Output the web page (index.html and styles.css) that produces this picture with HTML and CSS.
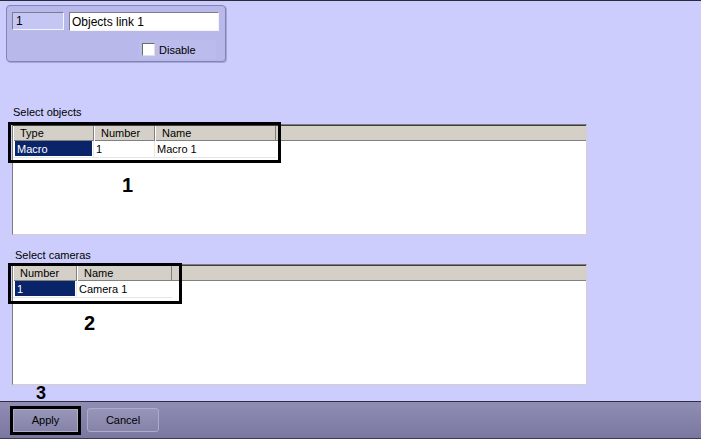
FILE: index.html
```html
<!DOCTYPE html>
<html lang="en">
  <head>
    <meta charset="UTF-8" />
    <title>Objects link</title>
    <link rel="stylesheet" href="styles.css">
  </head>
  <body>
    <div class="props">
      <div class="props-row">
        <input class="field field-id" type="text" value="1" readonly />
        <input class="field field-name" type="text" value="Objects link 1" />
      </div>
      <div class="props-row">
        <label class="check">
          <input type="checkbox" class="check-box" />
          <span>Disable</span>
        </label>
      </div>
    </div>

    <div class="group-label">Select objects</div>
    <div class="list list-objects">
      <div class="list-head">
        <div class="head-cell">Type</div>
        <div class="head-cell">Number</div>
        <div class="head-cell">Name</div>
        <div class="head-rest"></div>
      </div>
      <div class="list-row">
        <div class="cell"><span class="selected">Macro</span></div>
        <div class="cell">1</div>
        <div class="cell">Macro 1</div>
      </div>
      <div class="step step-1">1</div>
      <div class="mark"></div>
    </div>

    <div class="group-label group-label-cameras">Select cameras</div>
    <div class="list list-cameras">
      <div class="list-head">
        <div class="head-cell">Number</div>
        <div class="head-cell">Name</div>
        <div class="head-rest"></div>
      </div>
      <div class="list-row">
        <div class="cell"><span class="selected">1</span></div>
        <div class="cell">Camera 1</div>
      </div>
      <div class="step step-2">2</div>
      <div class="mark"></div>
    </div>

    <div class="step step-3">3</div>

    <div class="footer">
      <button class="btn btn-apply">Apply</button>
      <button class="btn">Cancel</button>
    </div>
  </body>
</html>
```

FILE: styles.css
```css
body {
  margin: 0;
  width: 701px;
  height: 439px;
  overflow: hidden;
  box-sizing: border-box;
  background-color: #cdcdfd;
  border-top: 1px solid #2b2b3c;
  font-family: "Liberation Sans", Arial, sans-serif;
  font-size: 11px;
  color: #000;
}

/* top properties panel */
.props {
  margin: 4px 0 0 6px;
  width: 220px;
  height: 57px;
  box-sizing: border-box;
  padding: 6px 0 0 5px;
  background-color: #b8b8ea;
  border: 1px solid #8484b4;
  border-radius: 4px;
  box-shadow: 1px 1px 0 #a6a6d6;
}

.props-row {
  display: flex;
}

.field {
  box-sizing: border-box;
  margin: 0;
  padding: 0 2px;
  font-family: "Liberation Sans", Arial, sans-serif;
  font-size: 12px;
  color: #000;
  border: 1px solid;
  border-color: #7c7c8c #f4f4ff #f4f4ff #7c7c8c;
  outline: none;
}

.field-id {
  width: 52px;
  height: 18px;
  padding-left: 3px;
  background-color: #c6c6f4;
}

.field-name {
  width: 150px;
  height: 19px;
  margin-left: 5px;
  background-color: #fff;
}

.check {
  display: flex;
  align-items: center;
  gap: 4px;
  margin: 9px 0 0 127px;
  padding: 3px 20px 3px 3px;
  background-color: #bcbcec;
}

.check-box {
  appearance: none;
  margin: 0;
  width: 13px;
  height: 13px;
  box-sizing: border-box;
  background-color: #fff;
  border: 1px solid;
  border-color: #6c6c6c #e0e0e0 #e0e0e0 #6c6c6c;
}

/* lists */
.group-label {
  margin: 44px 0 0 13px;
  height: 13px;
  line-height: 13px;
}

.group-label-cameras {
  margin: 14px 0 0 15px;
}

.list {
  position: relative;
  margin: 5px 0 0 12px;
  width: 575px;
  height: 111px;
  box-sizing: border-box;
  background-color: #fff;
  border: 1px solid;
  border-color: #7c7c7c #d4d0c8 #d4d0c8 #7c7c7c;
}

.list-cameras {
  margin-top: 2px;
  height: 121px;
}

.list-head {
  display: grid;
  background-color: #d4d0c8;
  border-top: 1px solid #404040;
  border-bottom: 1px solid #808080;
  box-sizing: border-box;
  height: 16px;
}

.list-objects .list-head,
.list-objects .list-row {
  grid-template-columns: 81px 61px 121px 1fr;
}

.list-cameras .list-head,
.list-cameras .list-row {
  grid-template-columns: 64px 95px 1fr;
}

.head-cell {
  padding-left: 6px;
  line-height: 15px;
  border-left: 1px solid #fff;
  border-right: 1px solid #808080;
  white-space: nowrap;
}

.list-row {
  display: grid;
  height: 17px;
  box-sizing: border-box;
}

.list-objects .list-row {
  width: 263px;
}

.list-cameras .list-row {
  width: 159px;
}

.cell {
  padding: 1px 0 0 2px;
  line-height: 15px;
  border-right: 1px solid #e6e6e6;
  border-bottom: 1px solid #e6e6e6;
  white-space: nowrap;
}

.cell:last-child {
  border-right: none;
}

.selected {
  display: block;
  height: 15px;
  margin: -1px 1px 0 0;
  padding-left: 2px;
  background-color: #0a246a;
  color: #fff;
  line-height: 16px;
}

/* annotation numbers and frames */
.step {
  font-size: 20px;
  font-weight: bold;
  line-height: 20px;
}

.step-1 {
  margin: 17px 0 0 109px;
}

.step-2 {
  margin: 15px 0 0 71px;
}

.step-3 {
  height: 16px;
  padding-left: 36px;
  font-size: 18px;
  line-height: 16px;
}

.mark {
  position: absolute;
  left: -5px;
  top: -3px;
  width: 273px;
  height: 41px;
  box-sizing: border-box;
  border: 3px solid #000;
}

.list-cameras .mark {
  top: -2px;
  width: 174px;
  height: 41px;
}

/* bottom bar */
.footer {
  display: flex;
  align-items: center;
  gap: 9px;
  height: 38px;
  box-sizing: border-box;
  padding-left: 13px;
  background: linear-gradient(#8f8db3, #7a78a0);
  border-top: 1px solid #2e2e40;
  border-bottom: 1px solid #3a3a50;
}

.btn {
  width: 72px;
  height: 24px;
  padding: 0;
  font-family: "Liberation Sans", Arial, sans-serif;
  font-size: 11px;
  color: #000;
  background: linear-gradient(#9795b8, #8583a9);
  border: 1px solid #aeadc6;
  border-radius: 3px;
}

.btn-apply {
  width: 65px;
  height: 23px;
  border-radius: 0;
  outline: 3px solid #000;
}
```
